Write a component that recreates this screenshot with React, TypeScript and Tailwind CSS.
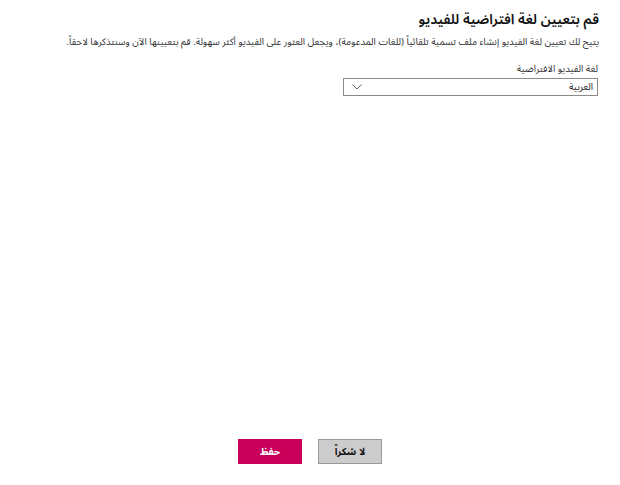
export default function App() {
  return (
    <div
      dir="rtl"
      className="w-[620px] h-[485px] bg-white flex flex-col text-[#222] font-['Noto_Sans_Arabic','Noto_Naskh_Arabic','DejaVu_Sans',sans-serif]"
    >
      {/* Header */}
      <div className="pr-[21px] pl-[18px] pt-[9px]">
        <h1 className="text-[14px] leading-[22px] font-semibold text-[#111]">
          قم بتعيين لغة افتراضية للفيديو
        </h1>
        <p className="mt-[4px] whitespace-nowrap text-[9.6px] leading-[15px] text-[#333]">
          يتيح لك تعيين لغة الفيديو إنشاء ملف تسمية تلقائياً (للغات المدعومة)، ويجعل العثور على الفيديو أكثر سهولة. قم بتعيينها الآن وسنتذكرها لاحقاً.
        </p>

        {/* Language select */}
        <div className="mt-[12px] w-[255px] mr-[1px]">
          <label className="block text-[9.6px] leading-[15px] text-[#333]">
            لغة الفيديو الافتراضية
          </label>
          <div className="mt-[1px] h-[18px] border border-[#8a8a8a] flex items-center justify-between pr-[4px] pl-[8px]">
            <span className="text-[9.6px] leading-[14px] text-[#222]">العربية</span>
            <svg width="10" height="6" viewBox="0 0 10 6" fill="none" className="text-[#666]">
              <polyline points="0.5,0.5 5,5 9.5,0.5" stroke="currentColor" strokeWidth="1" />
            </svg>
          </div>
        </div>
      </div>

      {/* Footer buttons */}
      <div className="mt-auto mb-[21px] flex justify-center gap-[16px]">
        <button className="w-[64px] h-[25px] bg-[#cccccc] border border-[#9a9a9a] text-[10px] leading-[14px] font-bold text-[#111]">
          لا شكراً
        </button>
        <button className="w-[64px] h-[25px] bg-[#c8005a] border border-[#c8005a] text-[10px] leading-[14px] font-bold text-white">
          حفظ
        </button>
      </div>
    </div>
  )
}
